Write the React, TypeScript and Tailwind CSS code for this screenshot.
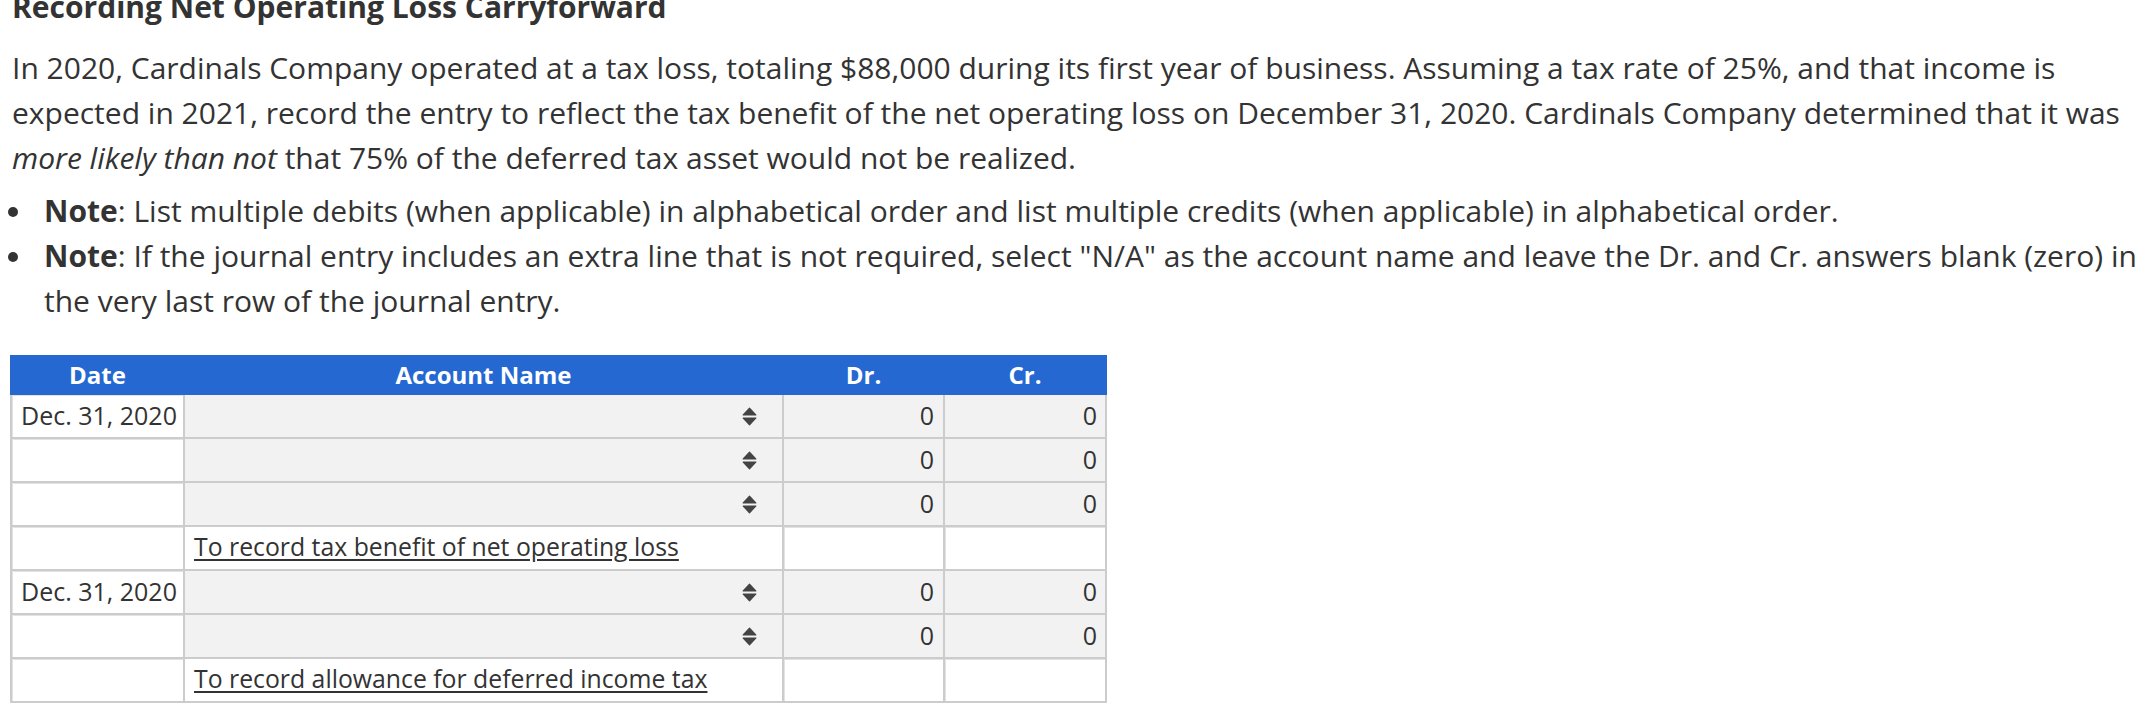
import React from "react";

type Row =
  | { kind: "entry"; date?: string }
  | { kind: "memo"; text: string };

const rows: Row[] = [
  { kind: "entry", date: "Dec. 31, 2020" },
  { kind: "entry" },
  { kind: "entry" },
  { kind: "memo", text: "To record tax benefit of net operating loss" },
  { kind: "entry", date: "Dec. 31, 2020" },
  { kind: "entry" },
  { kind: "memo", text: "To record allowance for deferred income tax" },
];

function SortIcon() {
  return (
    <svg width="15" height="19" viewBox="0 0 15 19" aria-hidden="true">
      <path d="M1.2 8 L7.5 1.2 L13.8 8 Z" fill="#444" stroke="#444" strokeWidth="1.2" strokeLinejoin="round" />
      <path d="M1.2 11 L7.5 17.8 L13.8 11 Z" fill="#444" stroke="#444" strokeWidth="1.2" strokeLinejoin="round" />
    </svg>
  );
}

function Bullet({ children }: { children: React.ReactNode }) {
  return (
    <li className="flex">
      <div className="w-[44px] shrink-0 pl-[8px]">
        <div className="mt-[19px] h-[10px] w-[10px] rounded-full bg-[#333333]" />
      </div>
      <div className="min-w-0 flex-1">{children}</div>
    </li>
  );
}

export default function App() {
  return (
    <div
      className="w-[2152px] h-[718px] overflow-hidden bg-white text-[#333333]"
      style={{ fontFamily: '"Open Sans", "Liberation Sans", sans-serif' }}
    >
      <h2 className="mt-[-16px] pl-[12px] text-[30px] leading-[45px] font-bold whitespace-nowrap">
        Recording Net Operating Loss Carryforward
      </h2>
      <p className="mt-[16px] pl-[12px] text-[30px] leading-[45px]">
        In 2020, Cardinals Company operated at a tax loss, totaling $88,000 during its first year of business. Assuming a
        tax rate of 25%, and that income is expected in 2021, record the entry to reflect the tax benefit of the net
        operating loss on December 31, 2020. Cardinals Company determined that it was <em>more likely than not</em> that
        75% of the deferred tax asset would not be realized.
      </p>
      <ul className="mt-[8px] text-[30px] leading-[45px]">
        <Bullet>
          <strong className="font-bold">Note</strong>: List multiple debits (when applicable) in alphabetical order and
          list multiple credits (when applicable) in alphabetical order.
        </Bullet>
        <Bullet>
          <strong className="font-bold">Note</strong>: If the journal entry includes an extra line that is not required,
          select "N/A" as the account name and leave the Dr. and Cr. answers blank (zero) in the very last row of the
          journal entry.
        </Bullet>
      </ul>

      <div className="ml-[10px] mt-[32px] w-[1097px]">
        <div className="grid h-[40px] grid-cols-[171px_597px_159px_160px] gap-[2px] bg-[#2668d1] px-[2px] text-[24px] font-bold text-white">
          <div className="flex items-center justify-center">Date</div>
          <div className="flex items-center justify-center">Account Name</div>
          <div className="flex items-center justify-center">Dr.</div>
          <div className="flex items-center justify-center">Cr.</div>
        </div>
        <div className="grid auto-rows-[42px] grid-cols-[171px_597px_159px_160px] gap-[2px] bg-[#cccccc] px-[2px] pb-[2px] text-[25px]">
          {rows.map((r, i) =>
            r.kind === "entry" ? (
              <React.Fragment key={i}>
                <div className="flex items-center bg-white pl-[9px] shadow-[inset_1px_1px_0_#e3e3e3]">
                  {r.date ?? ""}
                </div>
                <div className="flex items-center justify-end bg-[#f2f2f2] pr-[25px]">
                  <SortIcon />
                </div>
                <div className="flex items-center justify-end bg-[#f2f2f2] pr-[9px]">0</div>
                <div className="flex items-center justify-end bg-[#f2f2f2] pr-[8px]">0</div>
              </React.Fragment>
            ) : (
              <React.Fragment key={i}>
                <div className="bg-white shadow-[inset_1px_1px_0_#e3e3e3]" />
                <div className="flex items-center bg-white pb-[2px] pl-[9px] whitespace-nowrap text-[24.8px]">
                  <span className="underline underline-offset-[3px]">{r.text}</span>
                </div>
                <div className="bg-white shadow-[inset_1px_1px_0_#e3e3e3]" />
                <div className="bg-white shadow-[inset_1px_1px_0_#e3e3e3]" />
              </React.Fragment>
            )
          )}
        </div>
      </div>
    </div>
  );
}
